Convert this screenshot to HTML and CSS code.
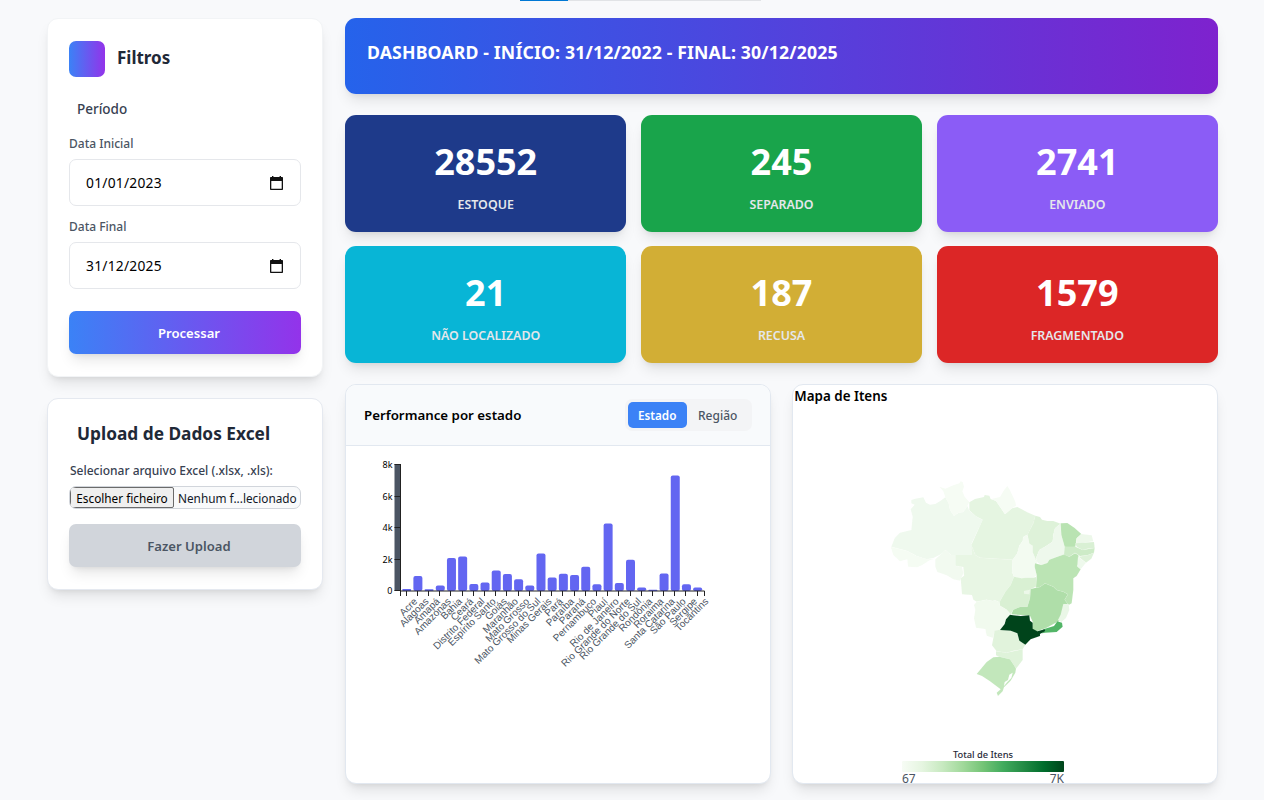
FILE: index.html
```
<!DOCTYPE html>
<html lang="pt">
<head>
<meta charset="utf-8">
<title>Dashboard</title>
<link rel="stylesheet" href="styles.css">
</head>
<body>
<div class="progress"><span class="progress-done"></span></div>
<div class="layout">
  <aside class="sidebar">
    <section class="card filters">
      <div class="brand"><span class="brand-mark"></span><h2 class="brand-title">Filtros</h2></div>
      <h3 class="group-title">Período</h3>
      <label class="label">Data Inicial</label>
      <div class="date"><span>01/01/2023</span><svg class="cal" viewBox="0 0 13 14"><path fill="#111" fill-rule="evenodd" d="M2 0h1.4v1h6.2V0H11v1h1.2q.8 0 .8.8v11.4q0 .8-.8.8H.8Q0 14 0 13.200V1.800Q0 1 .8 1H2zM1.300 5v7.700h10.400V5z"/></svg></div>
      <label class="label">Data Final</label>
      <div class="date"><span>31/12/2025</span><svg class="cal" viewBox="0 0 13 14"><path fill="#111" fill-rule="evenodd" d="M2 0h1.4v1h6.2V0H11v1h1.2q.8 0 .8.8v11.4q0 .8-.8.8H.8Q0 14 0 13.200V1.800Q0 1 .8 1H2zM1.300 5v7.700h10.400V5z"/></svg></div>
      <button class="btn btn-go">Processar</button>
    </section>
    <section class="card upload">
      <h2 class="upload-title">Upload de Dados Excel</h2>
      <label class="label label-dark">Selecionar arquivo Excel (.xlsx, .xls):</label>
      <div class="file"><span class="file-btn">Escolher ficheiro</span><span class="file-name">Nenhum f...lecionado</span></div>
      <button class="btn btn-off">Fazer Upload</button>
    </section>
  </aside>
  <main class="main">
    <header class="hero"><h1 class="hero-title">DASHBOARD - INÍCIO: 31/12/2022 - FINAL: 30/12/2025</h1></header>
    <div class="stats">
      <div class="stat navy"><b class="num">28552</b><span class="cap">ESTOQUE</span></div>
      <div class="stat green"><b class="num">245</b><span class="cap">SEPARADO</span></div>
      <div class="stat violet"><b class="num">2741</b><span class="cap">ENVIADO</span></div>
      <div class="stat cyan"><b class="num">21</b><span class="cap">NÃO LOCALIZADO</span></div>
      <div class="stat gold"><b class="num">187</b><span class="cap">RECUSA</span></div>
      <div class="stat red"><b class="num">1579</b><span class="cap">FRAGMENTADO</span></div>
    </div>
    <div class="panels">
      <section class="panel">
        <div class="panel-head"><h3 class="panel-title">Performance por estado</h3>
          <div class="tabs"><span class="tab tab-on">Estado</span><span class="tab">Região</span></div></div>
        <svg class="chart" id="chart" viewBox="346 446 424 337"></svg>
      </section>
      <section class="panel map-panel">
        <h3 class="map-title">Mapa de Itens</h3>
        <svg class="map" viewBox="793 408 424 375">
          <defs><linearGradient id="scale"><stop offset="0" stop-color="#f7fcf5"/><stop offset=".125" stop-color="#e5f5e0"/><stop offset=".25" stop-color="#c7e9c0"/><stop offset=".375" stop-color="#a1d99b"/><stop offset=".5" stop-color="#74c476"/><stop offset=".625" stop-color="#41ab5d"/><stop offset=".75" stop-color="#238b45"/><stop offset=".875" stop-color="#006d2c"/><stop offset="1" stop-color="#00441b"/></linearGradient></defs>
          <g class="state" transform="translate(880 470) scale(.33333)">
            <path fill="#eff9ee" d="M94 90L106 86 130 82 138 98 150 104 166 102 182 92 196 82 206 100 210 120 222 138 236 128 250 126 262 108 268 122 290 140 308 150 275 220 276 255 214 255 196 240 184 252 160 264 140 268 110 258 80 242 34 230 44 205 60 188 94 180 98 140 92 118 104 104 94 100Z"/>
            <path fill="#f6fcf4" d="M178 50L196 56 220 46 238 40 242 34 248 36 252 50 247 64 254 80 268 96 262 108 250 126 236 128 222 138 210 120 206 100 196 82 190 64Z"/>
            <path fill="#f5fcf3" d="M32 230L80 242 110 258 140 268 165 266 150 270 128 284 112 292 84 290 82 268 60 274 40 255Z"/>
            <path fill="#f2faf0" d="M166 268L184 252 196 240 214 255 226 255 226 288 246 290 250 310 240 332 220 328 200 316 172 306 166 290Z"/>
          </g>
          <g class="state" transform="translate(940 475) scale(.33333)">
            <path fill="#e5f5e1" d="M88 82L105 72 132 66 134 60 148 62 152 72 168 78 186 104 195 118 216 100 232 96 248 104 262 112 286 122 280 145 262 180 250 186 248 198 238 212 232 235 218 254 120 248 106 240 94 210 128 134 108 124 88 106Z"/>
            <path fill="#f6fcf4" d="M154 72L180 66 192 46 202 33 210 46 226 80 228 92 216 100 195 118 186 104 168 78Z"/>
            <path fill="#e8f6e4" d="M46 240L96 240 94 210 106 240 120 248 218 254 216 290 222 305 212 330 196 350 178 382 165 376 158 378 140 374 110 380 100 374 96 360 66 358 62 310 72 302 70 276 46 272Z"/>
            <path fill="#f3fbf1" d="M258 180L264 186 268 206 278 212 278 232 284 245 292 262 284 275 290 300 280 308 260 308 244 310 222 305 216 290 218 254 232 235 238 212 248 198 250 186Z"/>
            <path fill="#def2d9" d="M286 122L300 126 306 134 322 138 340 138 362 146 345 160 340 180 338 200 314 216 298 225 288 250 290 262 284 245 278 232 278 212 268 206 264 186 262 180 280 145Z"/>
            <path fill="#eef8ec" d="M362 146L364 180 374 215 374 238 350 246 328 254 322 264 304 270 292 262 288 250 298 225 314 216 338 200 340 180 345 160Z"/>
            <path fill="#d9f0d3" d="M222 305L244 310 260 308 280 308 288 306 288 335 272 342 270 370 262 396 240 396 220 404 212 418 200 404 180 392 178 382 196 350 212 330Z"/>
            <path fill="#ecf8e9" d="M252 348L270 344 268 358 252 356Z"/>
            <path fill="#afdea9" d="M272 342L288 338 300 336 315 325 340 335 350 345 370 350 384 358 374 374 386 390 372 396 368 412 362 436 350 442 320 458 282 472 276 460 278 440 270 422 244 420 214 418 220 404 240 396 262 396 270 370Z"/>
            <path fill="#f1faee" d="M110 380L140 374 158 378 165 376 178 382 180 392 200 404 212 418 200 432 182 464 165 470 158 488 140 482 136 462 108 458 102 430 106 404 102 390Z"/>
          </g>
          <g class="state" transform="translate(980 500) scale(.33333)">
            <path fill="#bbe4b4" d="M165 190L184 195 202 189 208 179 230 171 254 163 268 170 285 160 295 165 298 185 292 198 302 208 290 228 280 235 280 270 275 310 266 315 254 299 264 283 250 275 230 270 220 260 195 250 180 261 168 263 170 225 164 200Z"/>
            <path fill="#b9e3b2" d="M242 70L262 69 284 84 304 102 290 115 286 140 272 144 254 140 244 105Z"/>
            <path fill="#edf8ea" d="M304 102L335 106 340 124 310 128 288 132 290 115Z"/>
            <path fill="#d9f0d4" d="M286 130L310 128 342 126 344 144 322 146 308 150 290 140Z"/>
            <path fill="#cdebc7" d="M254 140L286 140 308 150 344 144 342 158 322 166 300 168 285 158 268 170 252 164Z"/>
            <path fill="#def2d9" d="M296 170L322 166 342 158 334 176 318 188Z"/>
            <path fill="#eef9ec" d="M294 170L318 188 302 208 292 200Z"/>
          </g>
          <g class="state" transform="translate(960 590) scale(.33333)">
            <path fill="#eaf7e7" d="M310 42L326 42 328 60 318 84 304 96 294 90 302 74Z"/>
            <path fill="#e1f3dc" d="M104 122L120 119 152 122 172 130 178 152 196 164 188 178 160 182 140 188 110 184 96 166Z"/>
            <path fill="#dff3da" d="M108 184L140 188 188 178 188 210 168 236 162 226 150 208 118 200 108 196Z"/>
            <path fill="#c2e7bb" d="M50 252L80 216 100 202 118 200 150 208 162 226 168 236 166 248 152 272 132 292 128 304 114 318 110 308 122 298 90 274 66 258Z"/>
            <path class="lagoon" d="M158 248L148 254 144 270 134 276 132 288 142 276 154 264Z"/>
            <path fill="#52b567" d="M250 118L282 108 292 94 306 98 308 110 290 126 256 128 246 130Z"/>
            <path fill="#00441b" d="M120 120L134 102 138 88 150 74 160 76 182 78 208 76 210 92 218 98 218 116 232 124 254 118 256 123 240 132 240 138 212 148 196 164 178 152 172 130 152 122Z"/>
          </g>
          <text class="legend-title" x="983" y="758" text-anchor="middle">Total de Itens</text>
          <rect x="902" y="761" width="162" height="11" rx="1" fill="url(#scale)"/>
          <text class="legend-num" x="902" y="783">67</text>
          <text class="legend-num" x="1064" y="783" text-anchor="end">7K</text>
        </svg>
      </section>
    </div>
  </main>
</div>
<script src="chart.js"></script>
</body>
</html>
```
FILE: chart.js
```
// Bar tops are given in chart units, measured from the top of the drawing.
const rows = [["Acre",589],["Alagoas",576],["Amapá",589.2],["Amazonas",585.5],["Bahia",558],["Ceará",556.5],["Distrito Federal",584],["Espírito Santo",582.5],["Goiás",570.5],["Maranhão",574],["Mato Grosso",579.300],["Mato Grosso do Sul",585.5],["Minas Gerais",553.5],["Pará",577.5],["Paraíba",573.7],["Paraná",575],["Pernambuco",566.8],["Piauí",584.300],["Rio de Janeiro",523.4],["Rio Grande do Norte",583],["Rio Grande do Sul",559.8],["Rondônia",587.5],["Roraima",589.8],["Santa Catarina",573.4],["São Paulo",475.4],["Sergipe",584.300],["Tocantins",587.5]];
let out = '<rect class="axis-fill" x="394.5" y="464" width="6" height="127"/>';
["8k", "6k", "4k", "2k", "0"].forEach((t, i) => {
  const y = [464.5, 496.5, 527.5, 559.5, 590.5][i];
  out += `<path class="tick" d="M394.5 ${y}h6"/><text class="ytext" x="392.500" y="${y + 3.5}" text-anchor="end">${t}</text>`;
});
rows.forEach(([name, top], i) => {
  const x = 406.7 + i * 11.19;
  const h = 591 - top;
  const r = Math.min(2, h / 2);
  out += `<rect class="bar" x="${x - 4.5}" y="${top}" width="9" height="${h}" rx="${r}"/>`;
  out += `<path class="tick" d="M${Math.round(x) - 0.5} 591v5"/>`;
  out += `<text class="xtext" text-anchor="end" transform="translate(${x + 11.3} 602) rotate(-45)">${name}</text>`;
});
out += '<path class="axis" d="M400.500 464V591M400.500 596V591H704.500V596"/>';
document.getElementById("chart").innerHTML = out;
```
FILE: styles.css
```
* { box-sizing: border-box; }
body { margin: 0; height: 800px; overflow: hidden; background: #f8f9fb; font-family: "Noto Sans", "Open Sans", sans-serif; color: #1f2937; }
h1, h2, h3 { margin: 0; white-space: nowrap; }
.progress { width: 241px; height: 1px; margin-left: 520px; background: #e1e3e6; display: flex; }
.progress-done { width: 48px; background: #0078d4; }
.layout { display: flex; gap: 22px; padding: 17px 46px 0 47px; align-items: flex-start; }
.sidebar { width: 276px; flex: none; display: flex; flex-direction: column; gap: 21px; }
.card { background: #fff; border: 1px solid #e5e9f0; border-radius: 11px; box-shadow: 0 9px 14px -3px rgba(0,0,0,.1), 0 4px 6px -4px rgba(0,0,0,.1); padding: 0 21px; display: flex; flex-direction: column; }
.filters { height: 359px; border-color: #f2f4f6; padding-top: 22px; }
.upload { height: 192px; }
.brand { display: flex; align-items: center; gap: 12px; height: 36px; }
.brand-mark { width: 36px; height: 36px; border-radius: 7px; background: linear-gradient(90deg, #3b82f6, #9333ea); }
.brand-title { font-size: 17px; line-height: 22px; margin-top: -2px; font-weight: 700; }
.group-title { font-size: 13.500px; font-weight: 500; line-height: 20px; margin: 22px 0 0 8px; color: #374151; }
.label { font-size: 12px; font-weight: 500; line-height: 18px; color: #4b5563; white-space: nowrap; }
.filters .label { margin-top: 16px; }
.date { margin-top: 6px; height: 47px; flex: none; border: 1px solid #e5e7eb; border-radius: 7px; padding: 0 17px 0 16px; display: flex; align-items: center; justify-content: space-between; font-size: 13.800px; letter-spacing: .25px; color: #000; }
.filters .date + .label { margin-top: 12px; }
.cal { width: 13px; height: 14px; }
.btn { border: 0; height: 43px; flex: none; border-radius: 7px; font: 600 13.100px "Noto Sans", sans-serif; padding: 0 0 0 8px; box-shadow: 0 9px 14px -3px rgba(0,0,0,.1), 0 4px 6px -4px rgba(0,0,0,.1); }
.btn-go { margin-top: 22px; color: #fff; background: linear-gradient(90deg, #3b82f6, #9333ea); }
.btn-off { margin-top: 15px; color: #4b5563; background: #d1d5db; }
.upload-title { font-size: 17.300px; font-weight: 700; line-height: 24px; margin: 23px 0 0 8px; }
.label-dark { color: #374151; margin: 16px 0 0 1px; }
.file { margin-top: 6px; height: 23px; border: 1px solid #d1d5db; border-radius: 7px; display: flex; background: #f9fafb; overflow: hidden; font-size: 11.800px; line-height: 21px; white-space: nowrap; color: #000; }
.file-btn { width: 104px; flex: none; height: 21px; line-height: 20px; border: 1px solid #6b6b6b; border-radius: 2px; background: #efefef; text-align: center; }
.file-name { color: #111827; margin-left: 4px; line-height: 22px; }
.main { flex: 1; min-width: 0; }
.hero { height: 76px; border-radius: 11px; padding: 21px 22px; background: linear-gradient(90deg, #2563eb, #7e22ce); box-shadow: 0 9px 14px -3px rgba(0,0,0,.1), 0 4px 6px -4px rgba(0,0,0,.1); }
.hero-title { color: #fff; font-size: 17.700px; letter-spacing: .14px; line-height: 27px; font-weight: 700; }
.stats { margin-top: 21px; display: grid; grid-template-columns: repeat(3, 1fr); grid-auto-rows: 117px; gap: 14px 14.400px; }
.stat { border-radius: 11px; display: flex; flex-direction: column; align-items: center; padding-top: 27px; box-shadow: 0 9px 14px -3px rgba(0,0,0,.1), 0 4px 6px -4px rgba(0,0,0,.1); }
.num { color: #fff; font-size: 36px; line-height: 40px; font-weight: 700; }
.cap { margin-top: 14px; color: #e5e7eb; font-size: 12.400px; line-height: 18px; font-weight: 600; }
.navy { background: #1e3a8a; }
.green { background: #19a44b; }
.violet { background: #8b5cf6; }
.cyan { background: #08b5d6; }
.gold { background: #d2ae35; }
.red { background: #dc2626; }
.panels { margin-top: 21px; display: grid; grid-template-columns: 1fr 1fr; gap: 21.600px; }
.panel { height: 400px; background: #fff; border: 1px solid #e2e8f0; border-radius: 11px; overflow: hidden; box-shadow: 0 9px 14px -3px rgba(0,0,0,.1), 0 4px 6px -4px rgba(0,0,0,.1); display: flex; flex-direction: column; }
.panel-head { height: 61px; flex: none; background: #f8fafc; border-bottom: 1px solid #e2e8f0; padding: 0 18px; display: flex; align-items: center; justify-content: space-between; }
.panel-title { font-size: 13.300px; font-weight: 600; color: #000; }
.tabs { display: flex; background: #f3f4f6; border-radius: 7px; padding: 3px; }
.tab { width: 62px; height: 26px; line-height: 27px; border-radius: 5px; text-align: center; font-size: 12px; font-weight: 500; color: #4b5563; }
.tab-on { width: 59px; background: #3b82f6; color: #fff; font-weight: 600; font-size: 11.700px; }
.chart { width: 424px; height: 337px; display: block; }
.axis-fill { fill: #4b5563; }
.tick, .axis { fill: none; stroke: #222; stroke-width: 1; }
.ytext { font: 9px "Noto Sans", sans-serif; fill: #000; }
.xtext { font: 10px "Liberation Sans", sans-serif; fill: #4b5563; }
.bar { fill: #6366f1; }
.map-title { font-size: 13.400px; line-height: 23px; height: 23px; padding-left: 1px; font-weight: 600; color: #000; }
.map { width: 424px; height: 375px; display: block; }
.state path { stroke: #fff; stroke-opacity: .2; stroke-width: 1; stroke-linejoin: round; }
.state .lagoon { fill: #fff; }
.legend-title { font: 500 9.300px "Noto Sans", sans-serif; fill: #1f2937; }
.legend-num { font: 12px "Noto Sans", sans-serif; fill: #4b5563; }
```
